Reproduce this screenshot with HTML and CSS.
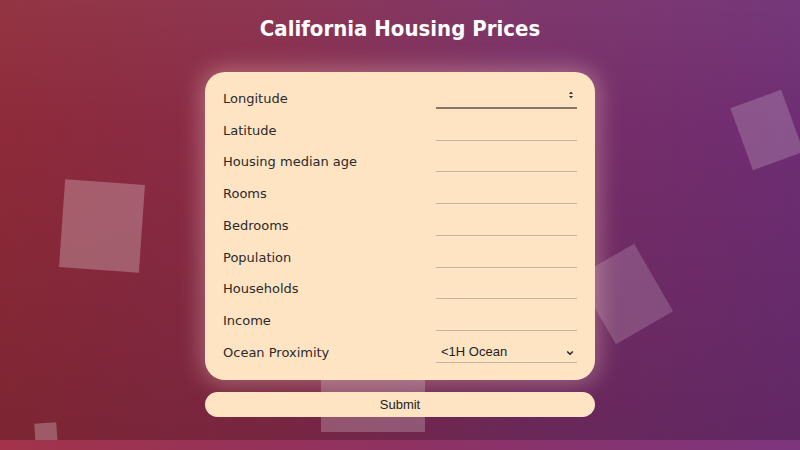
FILE: index.html
```html
<!DOCTYPE html>
<html lang="en">
<head>
<meta charset="utf-8">
<title>California Housing Prices</title>
<link rel="stylesheet" href="styles.css">
</head>
<body>
<div class="scene">
  <span class="sq sq-left"></span>
  <span class="sq sq-small"></span>
  <span class="sq sq-right-top"></span>
  <span class="sq sq-right-mid"></span>
  <span class="sq sq-bottom"></span>

  <h1 class="title">California Housing Prices</h1>

  <form class="card">
    <label class="row"><span class="lbl">Longitude</span>
      <span class="field focus"><input type="text"><svg class="spin" viewBox="0 0 8 12" width="8" height="12"><path d="M2 5 L4 2.5 L6 5 Z M2 7 L4 9.5 L6 7 Z" fill="#333"/></svg></span></label>
    <label class="row"><span class="lbl">Latitude</span><span class="field"><input type="text"></span></label>
    <label class="row"><span class="lbl">Housing median age</span><span class="field"><input type="text"></span></label>
    <label class="row"><span class="lbl">Rooms</span><span class="field"><input type="text"></span></label>
    <label class="row"><span class="lbl">Bedrooms</span><span class="field"><input type="text"></span></label>
    <label class="row"><span class="lbl">Population</span><span class="field"><input type="text"></span></label>
    <label class="row"><span class="lbl">Households</span><span class="field"><input type="text"></span></label>
    <label class="row"><span class="lbl">Income</span><span class="field"><input type="text"></span></label>
    <label class="row"><span class="lbl">Ocean Proximity</span>
      <span class="field"><select><option>&lt;1H Ocean</option><option>Inland</option><option>Near Bay</option><option>Near Ocean</option><option>Island</option></select><svg class="chev" viewBox="0 0 8 6" width="8" height="6"><path d="M1.2 1.5 L4 4.3 L6.8 1.5" fill="none" stroke="#222" stroke-width="1.5"/></svg></span></label>
  </form>

  <button class="submit" type="button">Submit</button>
</div>
</body>
</html>
```
FILE: styles.css
```css
html, body {
  margin: 0;
  padding: 0;
}
body {
  width: 800px;
  height: 450px;
  overflow: hidden;
  background: linear-gradient(to right, #a2334a 0%, #8f3262 50%, #7d357f 100%);
  font-family: "DejaVu Sans", sans-serif;
}
.scene {
  position: relative;
  height: 440px;
  overflow: hidden;
  background:
    linear-gradient(to bottom, rgba(255,255,255,0.05) 0%, rgba(0,0,0,0) 30%, rgba(0,0,0,0.12) 100%),
    linear-gradient(to right, #8e2a39 0%, #872b4a 35%, #782d64 65%, #6e2d73 100%);
  display: flex;
  flex-direction: column;
  align-items: center;
}
.title {
  margin: 0;
  padding-top: 14px;
  height: 40px;
  font-family: "DejaVu Sans Condensed", "DejaVu Sans", sans-serif;
  font-weight: bold;
  font-size: 22px;
  line-height: 30px;
  color: #ffffff;
  position: relative;
  z-index: 2;
}
.card {
  position: relative;
  z-index: 2;
  box-sizing: border-box;
  width: 390px;
  margin-top: 18px;
  padding: 5px 18px 17px 18px;
  background: #ffe4c4;
  border-radius: 20px;
  box-shadow: 0 0 22px 4px rgba(255, 215, 200, 0.35);
  display: flex;
  flex-direction: column;
}
.row {
  height: 31.75px;
  display: flex;
  justify-content: space-between;
  align-items: flex-end;
}
.lbl {
  font-size: 13px;
  line-height: 16px;
  margin-bottom: 2px;
  color: #2a2a2a;
}
.field {
  position: relative;
  width: 141px;
  height: 22px;
  box-sizing: border-box;
  border-bottom: 1px solid #c4b4a2;
  display: flex;
  align-items: center;
}
.field.focus {
  border-bottom: 2px solid #85766a;
}
.field input, .field select {
  appearance: none;
  -webkit-appearance: none;
  border: none;
  outline: none;
  background: transparent;
  width: 100%;
  height: 100%;
  padding: 0 0 0 5px;
  margin: 0;
  font-family: "Liberation Sans", Arial, sans-serif;
  font-size: 13px;
  color: #222;
}
.spin {
  position: absolute;
  right: 2px;
  top: 2px;
}
.chev {
  position: absolute;
  right: 3px;
  top: 9px;
  pointer-events: none;
}
.submit {
  position: relative;
  z-index: 2;
  margin-top: 12px;
  width: 390px;
  height: 25px;
  border: none;
  border-radius: 13px;
  background: #ffe4c4;
  font-family: "Liberation Sans", Arial, sans-serif;
  font-size: 13px;
  color: #222;
  padding: 0;
}
.sq {
  position: absolute;
  z-index: 1;
  background: rgba(255, 255, 255, 0.25);
}
.sq-left {
  left: 62px;
  top: 182px;
  width: 80px;
  height: 88px;
  transform: rotate(4deg);
}
.sq-small {
  left: 35px;
  top: 423px;
  width: 22px;
  height: 22px;
  transform: rotate(-4deg);
}
.sq-right-top {
  left: 740px;
  top: 97px;
  width: 54px;
  height: 66px;
  transform: rotate(-20deg);
  background: rgba(255, 255, 255, 0.19);
}
.sq-right-mid {
  left: 592px;
  top: 255px;
  width: 66px;
  height: 78px;
  transform: rotate(-30deg);
  background: rgba(255, 255, 255, 0.17);
}
.sq-bottom {
  left: 321px;
  top: 330px;
  width: 104px;
  height: 102px;
  background: rgba(255, 255, 255, 0.22);
}
```
